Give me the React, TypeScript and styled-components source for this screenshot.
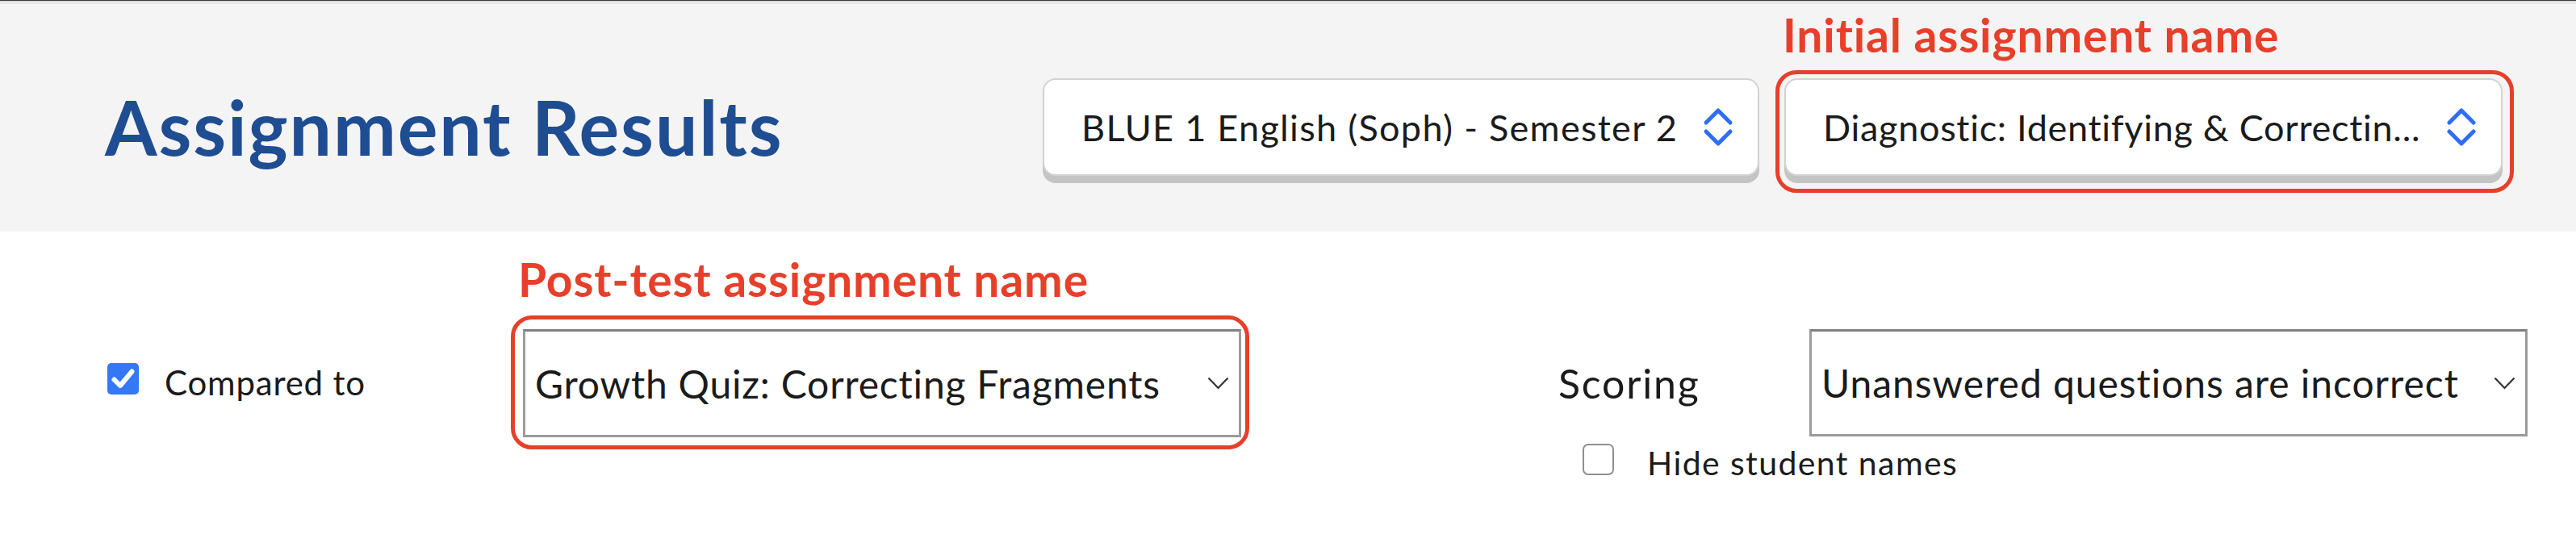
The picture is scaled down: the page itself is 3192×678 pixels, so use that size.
import React from "react";
import styled, { createGlobalStyle } from "styled-components";

const GlobalStyle = createGlobalStyle`
  html, body { margin: 0; padding: 0; background: #ffffff; }
  body { font-family: Lato, "Noto Sans", sans-serif; color: #1b1b1b; }
  * { box-sizing: border-box; }
`;

const Page = styled.div`
  width: 3192px;
  min-height: 678px;
  background: #ffffff;
`;

const Header = styled.header`
  display: flex;
  align-items: center;
  justify-content: space-between;
  height: 287px;
  padding: 27px 91px 0 130px;
  background: #f4f4f4;
  border-top: 1px solid #3a3a3a;
  box-shadow: inset 0 1px 0 #d0d0d0, inset 0 4px 0 #e8e8e8;
`;

const Title = styled.h1`
  margin: 0;
  font-size: 93px;
  line-height: 1.2;
  font-weight: 700;
  letter-spacing: 1.9px;
  color: #1f4d92;
  white-space: nowrap;
`;

const SelectGroup = styled.div`
  display: flex;
  gap: 31px;
`;

const PillSelect = styled.div<{ $width: number; $spacing: number }>`
  display: flex;
  align-items: center;
  justify-content: space-between;
  width: ${(p) => p.$width}px;
  height: 121px;
  padding: 0 30px 0 46px;
  background: #ffffff;
  border: 2px solid #d2d2d2;
  border-radius: 16px;
  box-shadow: 0 9px 0 #c4c4c4;
  font-size: 45px;
  letter-spacing: ${(p) => p.$spacing}px;
  color: #1b1b1b;
  white-space: nowrap;
`;

const Filters = styled.section`
  display: flex;
  align-items: flex-start;
  padding: 121px 0 0 133px;
`;

const CompareToggle = styled.label`
  display: flex;
  align-items: flex-start;
  gap: 32px;
  width: 515px;
  margin-top: 41px;
`;

const Box = styled.span<{ $checked?: boolean }>`
  display: inline-flex;
  align-items: center;
  justify-content: center;
  flex: none;
  width: 39px;
  height: 39px;
  margin-top: 1px;
  border-radius: ${(p) => (p.$checked ? "5px" : "7px")};
  background: ${(p) => (p.$checked ? "#3478f6" : "#ffffff")};
  border: ${(p) => (p.$checked ? "none" : "2.5px solid #8f8f8f")};
`;

const ToggleText = styled.span<{ $size: number; $spacing: number }>`
  font-size: ${(p) => p.$size}px;
  line-height: ${(p) => Math.round(p.$size * 1.2)}px;
  letter-spacing: ${(p) => p.$spacing}px;
  color: #1b1b1b;
  white-space: nowrap;
`;

const PlainSelect = styled.div<{ $height: number; $spacing: number }>`
  display: flex;
  align-items: center;
  justify-content: space-between;
  width: 890px;
  height: ${(p) => p.$height}px;
  padding: 0 12px 0 12px;
  background: #ffffff;
  border: 3px solid #9b9b9b;
  border-top-color: #7f7f7f;
  font-size: 48px;
  letter-spacing: ${(p) => p.$spacing}px;
  color: #1b1b1b;
  white-space: nowrap;
`;

const Annotated = styled.div`
  position: relative;
`;

const Ring = styled.div<{ $t: number; $r: number; $b: number; $l: number }>`
  position: absolute;
  top: ${(p) => p.$t}px;
  right: ${(p) => p.$r}px;
  bottom: ${(p) => p.$b}px;
  left: ${(p) => p.$l}px;
  border: 5px solid #e6402b;
  border-radius: 26px;
  pointer-events: none;
`;

const Callout = styled.div<{ $t: number; $l: number }>`
  position: absolute;
  top: ${(p) => p.$t}px;
  left: ${(p) => p.$l}px;
  font-size: 57px;
  line-height: 1;
  font-weight: 700;
  letter-spacing: 0.85px;
  color: #e6402b;
  white-space: nowrap;
`;

const ScoringBlock = styled.div`
  display: flex;
  flex-direction: column;
  margin-left: 393px;
`;

const ScoringRow = styled.div`
  display: flex;
  align-items: center;
`;

const ScoringLabel = styled.span`
  width: 311px;
  font-size: 50px;
  letter-spacing: 1.8px;
  color: #1b1b1b;
`;

const HideRow = styled.label`
  display: flex;
  align-items: flex-start;
  gap: 41px;
  margin-top: 8px;
  padding-left: 30px;
`;

const UpDown = () => (
  <svg width="38" height="50" viewBox="0 0 38 50" aria-hidden>
    <polyline points="4,19 19,4 34,19" fill="none" stroke="#2f6df6" strokeWidth="5" strokeLinecap="round" strokeLinejoin="round" />
    <polyline points="4,30 19,45 34,30" fill="none" stroke="#2f6df6" strokeWidth="5" strokeLinecap="round" strokeLinejoin="round" />
  </svg>
);

const Chevron = () => (
  <svg width="27" height="16" viewBox="0 0 27 16" aria-hidden>
    <polyline points="1.5,1.5 13.5,14 25.5,1.5" fill="none" stroke="#333" strokeWidth="2.2" />
  </svg>
);

const Check = () => (
  <svg width="39" height="39" viewBox="0 0 39 39" aria-hidden>
    <polyline points="8.5,20.5 16,28 30.5,10.5" fill="none" stroke="#fff" strokeWidth="6" strokeLinecap="round" strokeLinejoin="round" />
  </svg>
);

export default function App() {
  return (
    <Page>
      <GlobalStyle />
      <Header>
        <Title>Assignment Results</Title>
        <SelectGroup>
          <PillSelect $width={888} $spacing={1.3}>
            <span>BLUE 1 English (Soph) - Semester 2</span>
            <UpDown />
          </PillSelect>
          <Annotated>
            <Callout $t={-82} $l={-2}>Initial assignment name</Callout>
            <PillSelect $width={890} $spacing={0.7}>
              <span>Diagnostic: Identifying &amp; Correctin...</span>
              <UpDown />
            </PillSelect>
            <Ring $t={-10} $r={-14} $b={-21} $l={-11} />
          </Annotated>
        </SelectGroup>
      </Header>
      <Filters>
        <CompareToggle>
          <Box $checked>
            <Check />
          </Box>
          <ToggleText $size={42} $spacing={0.8}>Compared to</ToggleText>
        </CompareToggle>
        <Annotated>
          <Callout $t={-90} $l={-6}>Post-test assignment name</Callout>
          <PlainSelect $height={134} $spacing={0.8}>
            <span>Growth Quiz: Correcting Fragments</span>
            <Chevron />
          </PlainSelect>
          <Ring $t={-17} $r={-10} $b={-15} $l={-15} />
        </Annotated>
        <ScoringBlock>
          <ScoringRow>
            <ScoringLabel>Scoring</ScoringLabel>
            <PlainSelect $height={133} $spacing={0.95}>
              <span>Unanswered questions are incorrect</span>
              <Chevron />
            </PlainSelect>
          </ScoringRow>
          <HideRow>
            <Box />
            <ToggleText $size={41} $spacing={1.4}>Hide student names</ToggleText>
          </HideRow>
        </ScoringBlock>
      </Filters>
    </Page>
  );
}
